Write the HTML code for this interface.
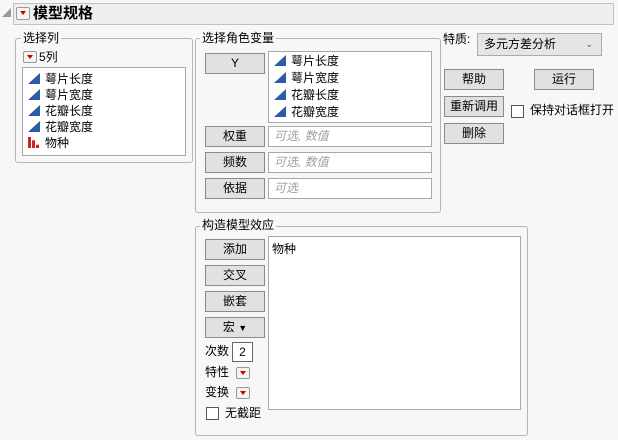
<!DOCTYPE html><html><head><meta charset="utf-8"><style>
body{margin:0;width:618px;height:440px;background:#f7f7f7;font-family:"Liberation Sans","Noto Sans CJK SC",sans-serif;font-size:12px;color:#000;position:relative;overflow:hidden}
div{box-sizing:border-box}
.a{position:absolute}
.grp{position:absolute;border:1px solid #b4b4b4;border-radius:3px}
.lbl{position:absolute;background:#f7f7f7;padding:0 2px;font-size:12px;line-height:14px}
.btn{position:absolute;background:#e1e1e1;border:1px solid #8a8a8a;text-align:center;line-height:18px;font-size:12px}
.box{position:absolute;background:#fff;border:1px solid #a8a8a8}
.ph{color:#a0a0a0;font-style:italic;padding-left:5px;line-height:19px}
.dd{position:absolute;width:14px;height:12px;border:1px solid #999;border-radius:2px;background:#f4f4f4}
.dd:after{content:"";position:absolute;left:3px;top:3px;border-left:3.5px solid transparent;border-right:3.5px solid transparent;border-top:4px solid #c00}
.it{position:absolute;left:5px;line-height:16px}
.tri{display:inline-block;width:0;height:0;border-left:12px solid transparent;border-bottom:11px solid #2e5aa8;margin-right:5px;vertical-align:-1px}
.cb{position:absolute;width:13px;height:13px;background:#fff;border:1px solid #555}
</style></head><body>
<div class="a" style="left:2px;top:8px;width:0;height:0;border-left:9px solid transparent;border-bottom:9px solid #999"></div>
<div class="a" style="left:13px;top:3px;width:601px;height:22px;border:1px solid #c0c0c0;background:#efefef"></div>
<div class="dd" style="left:16px;top:7px;height:13px"></div>
<div class="a" style="left:33px;top:4px;font-weight:bold;font-size:15px;line-height:20px">模型规格</div>

<div class="grp" style="left:15px;top:38px;width:178px;height:125px"></div>
<div class="lbl" style="left:21px;top:31px">选择列</div>
<div class="dd" style="left:23px;top:51px"></div>
<div class="a" style="left:39px;top:50px;line-height:14px">5列</div>
<div class="box" style="left:22px;top:67px;width:164px;height:89px">
<div class="it" style="top:3px"><span class="tri"></span>萼片长度</div>
<div class="it" style="top:19px"><span class="tri"></span>萼片宽度</div>
<div class="it" style="top:35px"><span class="tri"></span>花瓣长度</div>
<div class="it" style="top:51px"><span class="tri"></span>花瓣宽度</div>
<div class="it" style="top:67px"><span style="display:inline-block;width:12px;height:11px;margin-right:5px;vertical-align:-1px;background:linear-gradient(90deg,#c22 0 3px,transparent 3px 4px,#c22 4px 7px,transparent 7px 8px,#c22 8px 11px,transparent 11px);clip-path:polygon(0 0,3px 0,3px 100%,4px 100%,4px 30%,7px 30%,7px 100%,8px 100%,8px 70%,11px 70%,11px 100%,0 100%)"></span>物种</div>
</div>

<div class="grp" style="left:195px;top:38px;width:246px;height:175px"></div>
<div class="lbl" style="left:200px;top:31px">选择角色变量</div>
<div class="btn" style="left:205px;top:53px;width:60px;height:21px">Y</div>
<div class="box" style="left:268px;top:51px;width:164px;height:72px">
<div class="it" style="top:1px"><span class="tri"></span>萼片长度</div>
<div class="it" style="top:18px"><span class="tri"></span>萼片宽度</div>
<div class="it" style="top:35px"><span class="tri"></span>花瓣长度</div>
<div class="it" style="top:52px"><span class="tri"></span>花瓣宽度</div>
</div>
<div class="btn" style="left:205px;top:126px;width:60px;height:21px">权重</div>
<div class="box ph" style="left:268px;top:126px;width:164px;height:21px">可选, 数值</div>
<div class="btn" style="left:205px;top:152px;width:60px;height:21px">频数</div>
<div class="box ph" style="left:268px;top:152px;width:164px;height:21px">可选, 数值</div>
<div class="btn" style="left:205px;top:178px;width:60px;height:21px">依据</div>
<div class="box ph" style="left:268px;top:178px;width:164px;height:21px">可选</div>

<div class="a" style="left:443px;top:31px;line-height:16px">特质:</div>
<div class="a" style="left:477px;top:33px;width:125px;height:23px;border:1px solid #acacac;background:#e5e5e5;padding-left:6px;line-height:21px">多元方差分析<span style="position:absolute;right:8px;top:0;font-size:9px;color:#555">⌄</span></div>
<div class="btn" style="left:444px;top:69px;width:60px;height:21px">帮助</div>
<div class="btn" style="left:534px;top:69px;width:60px;height:21px">运行</div>
<div class="btn" style="left:444px;top:96px;width:60px;height:21px">重新调用</div>
<div class="cb" style="left:511px;top:105px"></div>
<div class="a" style="left:530px;top:102px;line-height:16px">保持对话框打开</div>
<div class="btn" style="left:444px;top:123px;width:60px;height:21px">删除</div>

<div class="grp" style="left:195px;top:226px;width:333px;height:210px"></div>
<div class="lbl" style="left:200px;top:218px">构造模型效应</div>
<div class="btn" style="left:205px;top:239px;width:60px;height:21px">添加</div>
<div class="btn" style="left:205px;top:265px;width:60px;height:21px">交叉</div>
<div class="btn" style="left:205px;top:291px;width:60px;height:21px">嵌套</div>
<div class="btn" style="left:205px;top:317px;width:60px;height:21px">宏 <span style="font-size:9px">▼</span></div>
<div class="a" style="left:205px;top:343px;line-height:16px">次数</div>
<div class="box" style="left:232px;top:342px;width:21px;height:20px;text-align:center;line-height:18px;border-color:#666">2</div>
<div class="a" style="left:205px;top:364px;line-height:16px">特性</div>
<div class="dd" style="left:236px;top:367px"></div>
<div class="a" style="left:205px;top:384px;line-height:16px">变换</div>
<div class="dd" style="left:236px;top:387px"></div>
<div class="cb" style="left:206px;top:407px"></div>
<div class="a" style="left:225px;top:405px;line-height:16px">无截距</div>
<div class="box" style="left:268px;top:236px;width:253px;height:174px"><div style="padding:3px 0 0 3px">物种</div></div>
</body></html>
